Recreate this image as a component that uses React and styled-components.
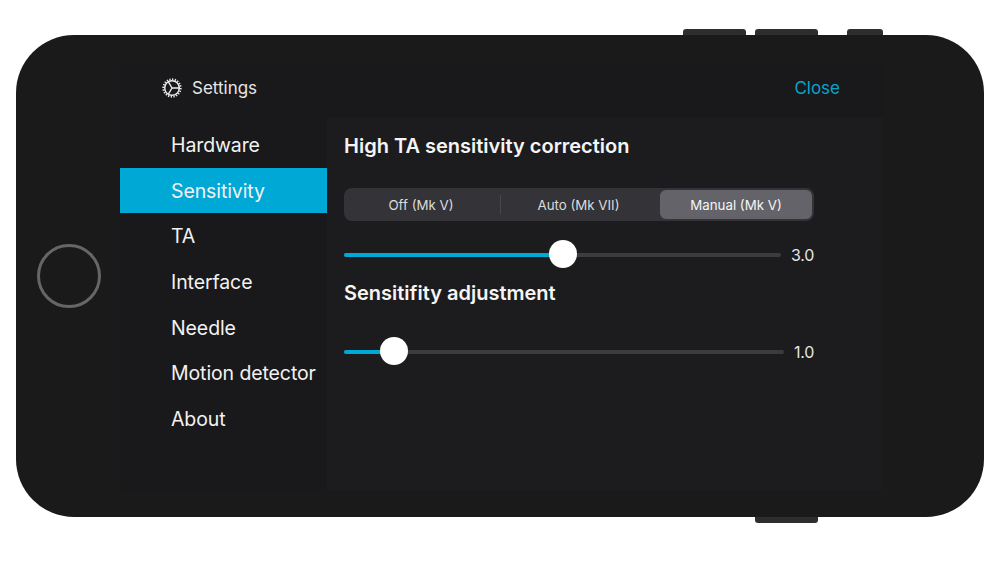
import { createGlobalStyle, styled } from 'styled-components';

const GlobalStyle = createGlobalStyle`
	html, body {
		margin: 0;
		background: #fff;
	}
	* {
		box-sizing: border-box;
	}
`;

const Page = styled.div`
	width: 1000px;
	height: 563px;
	padding: 35px 16px 46px;
	font-family: Inter, 'Liberation Sans', sans-serif;
	overflow: hidden;
`;

const Phone = styled.div`
	position: relative;
	display: flex;
	width: 968px;
	height: 482px;
	background: #1a1a1b;
	border-radius: 58px;
`;

const SideButton = styled.span`
	position: absolute;
	left: ${(props) => props.left}px;
	width: ${(props) => props.width}px;
	height: 6px;
	background: #2e2e30;
	${(props) => (props.bottom ? 'bottom: -6px;' : 'top: -6px;')}
	border-radius: ${(props) => (props.bottom ? '0 0 3px 3px' : '3px 3px 0 0')};
`;

const Bezel = styled.div`
	flex: none;
	display: flex;
	align-items: center;
	justify-content: center;
	width: 104px;
	padding-left: 2px;
`;

const HomeButton = styled.div`
	width: 64px;
	height: 64px;
	border: 3px solid #666668;
	border-radius: 50%;
`;

const Screen = styled.div`
	display: flex;
	flex-direction: column;
	width: 763px;
	height: 425px;
	margin-top: 30px;
	background: #1c1c1e;
`;

const Header = styled.header`
	flex: none;
	display: flex;
	align-items: center;
	justify-content: space-between;
	height: 53px;
	padding: 0 43px 7px 41px;
	background: #19191b;
`;

const HeaderTitle = styled.div`
	display: flex;
	align-items: center;
	gap: 9px;
	color: #e6e6e6;
	font-size: 17px;
`;

const CloseLink = styled.a`
	color: #0aa3cc;
	font-size: 17px;
`;

const Body = styled.div`
	flex: 1;
	display: flex;
`;

const Sidebar = styled.nav`
	flex: none;
	width: 207px;
	padding-top: 4px;
	background: #19191b;
`;

const MenuItem = styled.div`
	display: flex;
	align-items: center;
	height: 45.6px;
	padding: 1px 0 0 51px;
	color: #f2f2f2;
	font-size: 19.5px;
	letter-spacing: -0.1px;
	white-space: nowrap;
	background: ${(props) => (props.active ? '#00a8d6' : 'transparent')};
`;

const Content = styled.main`
	flex: 1;
	padding: 13px 69px 0 17px;
`;

const Heading = styled.h2`
	margin: 0;
	color: #f5f5f5;
	font-size: 20px;
	font-weight: 600;
	line-height: 30px;
`;

const SecondHeading = styled(Heading)`
	margin-top: 9px;
`;

const Segmented = styled.div`
	display: grid;
	grid-template-columns: 155px 159px 1fr;
	align-items: center;
	height: 33px;
	margin-top: 27px;
	padding: 2px;
	background: #333338;
	border-radius: 8px;
`;

const Segment = styled.div`
	display: flex;
	align-items: center;
	justify-content: center;
	height: 29px;
	padding-right: ${(props) => (props.active ? '0' : '4px')};
	color: ${(props) => (props.active ? '#f5f5f5' : '#dcdcdc')};
	font-size: 13.3px;
	background: ${(props) => (props.active ? '#636369' : 'transparent')};
	border-radius: 6px;
	border-right: ${(props) => (props.divider ? '1px solid #48484c' : 'none')};
	${(props) => props.divider && 'border-radius: 0; height: 19px;'}
`;

const SliderRow = styled.div`
	display: flex;
	align-items: center;
	gap: 10px;
	height: 28px;
	margin-top: ${(props) => props.top}px;
`;

const Track = styled.div`
	position: relative;
	flex: 1;
	height: 4px;
	background: #3c3c40;
	border-radius: 2px;
`;

const Fill = styled.div`
	height: 100%;
	background: #00a8d6;
	border-radius: 2px;
`;

const Thumb = styled.div`
	position: absolute;
	top: -13px;
	width: 28px;
	height: 28px;
	margin-left: -14px;
	background: #fff;
	border-radius: 50%;
`;

const SliderValue = styled.span`
	color: #e6e6e6;
	font-size: 16px;
	letter-spacing: -0.3px;
`;

const GearIcon = () => (
	<svg width="22" height="22" viewBox="0 0 22 22" fill="none" stroke="#ececec">
		<circle cx="11" cy="11" r="7.3" strokeWidth="1.5" />
		<circle cx="11" cy="11" r="8.8" strokeWidth="1.7" strokeDasharray="1.3 1.45" />
		<path d="M11 11 L18 11 M11 11 L7.4 4.8 M11 11 L7.4 17.2" strokeWidth="1.4" />
	</svg>
);

const Slider = ({ value, percent, top }) => {
	return (
		<SliderRow top={top}>
			<Track>
				<Fill style={{ width: `${percent}%` }} />
				<Thumb style={{ left: `${percent}%` }} />
			</Track>
			<SliderValue>{value}</SliderValue>
		</SliderRow>
	);
};

const menu = ['Hardware', 'Sensitivity', 'TA', 'Interface', 'Needle', 'Motion detector', 'About'];

const App = () => {
	return (
		<Page>
			<GlobalStyle />
			<Phone>
				<SideButton left={667} width={63} />
				<SideButton left={739} width={63} />
				<SideButton left={831} width={36} />
				<SideButton left={739} width={63} bottom />
				<Bezel>
					<HomeButton />
				</Bezel>
				<Screen>
					<Header>
						<HeaderTitle>
							<GearIcon />
							Settings
						</HeaderTitle>
						<CloseLink>Close</CloseLink>
					</Header>
					<Body>
						<Sidebar>
							{menu.map((item) => (
								<MenuItem key={item} active={item === 'Sensitivity'}>
									{item}
								</MenuItem>
							))}
						</Sidebar>
						<Content>
							<Heading>High TA sensitivity correction</Heading>
							<Segmented>
								<Segment divider>Off (Mk V)</Segment>
								<Segment>Auto (Mk VII)</Segment>
								<Segment active>Manual (Mk V)</Segment>
							</Segmented>
							<Slider value="3.0" percent={50.1} top={20} />
							<SecondHeading>Sensitifity adjustment</SecondHeading>
							<Slider value="1.0" percent={11.4} top={30} />
						</Content>
					</Body>
				</Screen>
			</Phone>
		</Page>
	);
};

export default App;
